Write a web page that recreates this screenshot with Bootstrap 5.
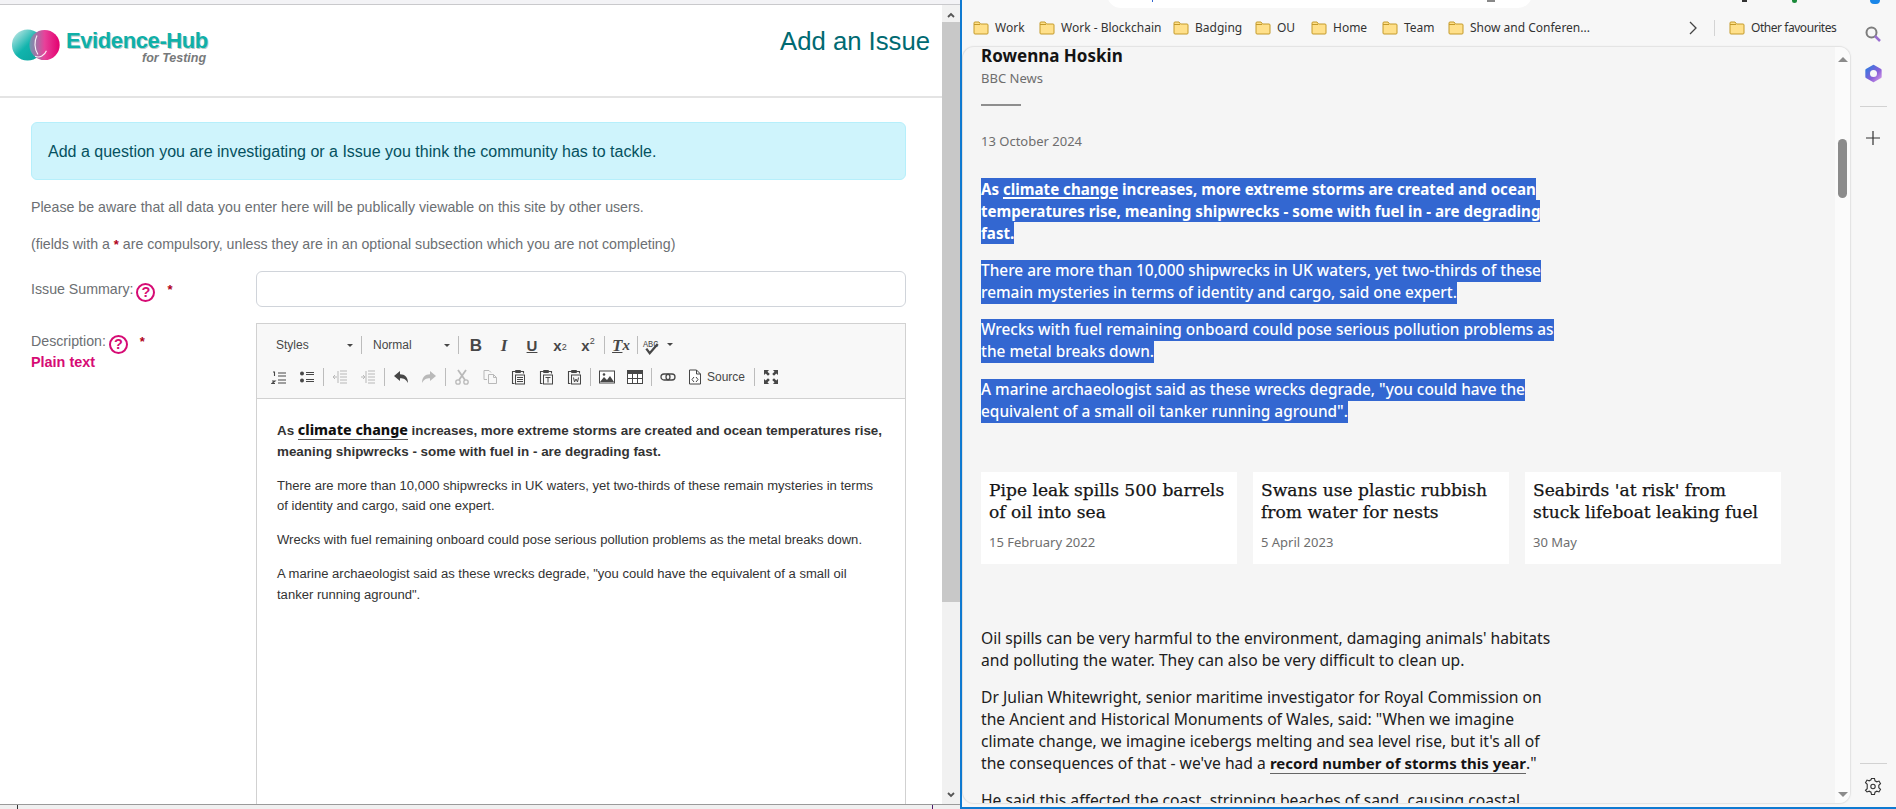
<!DOCTYPE html>
<html lang="en">
<head>
<meta charset="utf-8">
<title>Add an Issue</title>
<link href="https://cdn.jsdelivr.net/npm/bootstrap@5.3.0/dist/css/bootstrap.min.css" rel="stylesheet">
<style>
html,body{height:809px;overflow:hidden;margin:0}
body{font-family:"Liberation Sans",Arial,sans-serif;background:#fff;color:#333}
.pane-left{width:960px;height:809px;flex:none}
.top-strip{height:5px;background:#f3f3f6;border-bottom:1px solid #c9c9cc}
.win-left{height:799px;overflow:hidden}
.bottom-strip{height:5px;background:#f0f0f0;border-top:1px solid #9a9a9a;position:relative}
.bottom-strip i{position:absolute;top:0;width:1px;height:5px;background:#333}
.bottom-strip i:first-child{left:17px}.bottom-strip i:nth-child(2){left:932px;background:#4b1d6b}
.page-left{width:942px;flex:none;overflow:hidden}
.head-row{height:93px;border-bottom:2px solid #e4e4e4;padding:0 12px 0 12px}
.logo-box{width:200px;height:40px;margin-top:-5px}
.logo-name{font-weight:700;font-size:22px;line-height:24px;color:#0fb0a8;letter-spacing:-.4px;text-shadow:1px 1px 0 #b9c9c8;position:absolute;left:54px;top:1px;white-space:nowrap}
.logo-sub{font-weight:700;font-style:italic;font-size:12.5px;line-height:14px;color:#77797a;position:absolute;left:130px;top:23px;white-space:nowrap}
.page-title{font-size:25.7px;line-height:34px;color:#006a72;font-weight:400;margin:0 0 19px}
.form-wrap{padding:24px 36px 0 31px;font-size:14.2px;color:#6c6f73}
.note-box{height:58px;padding:2px 16px 0;margin:0 0 19px;font-size:16px;color:#055160;background:#cff4fc;border-color:#b6effb;display:flex;align-items:center}
.form-note{margin:0 0 21px;line-height:16px}
.form-note.last-note{margin-bottom:18px}
.req{color:#b00020;font-weight:700;font-size:13px}
.fld-label{width:225px;flex:none;line-height:20px}
.help-q{display:inline-flex;width:19px;height:19px;border:2.6px solid #d60b74;border-radius:50%;color:#d60b74;font-size:14.5px;font-weight:700;align-items:center;justify-content:center;margin:0 12px 0 -1px;line-height:1;vertical-align:-3px}
.plain-link{color:#d60b74;font-weight:700;font-size:14.4px;line-height:20px;margin-top:-2px}
.sum-input{height:36px;border-color:#d0d4da}
.row-sum{margin-bottom:16px}
.row-sum .fld-label{padding-top:8px}
.row-desc .fld-label{padding-top:8px}
.editor-box{flex:1;height:600px;border:1px solid #d1d1d1}
.ed-toolbar{height:75px;background:#f8f8f8;border-bottom:1px solid #d1d1d1;padding:5px 0 0 8px;color:#474747}
.ed-line{height:32px;display:flex;align-items:center}
.tb-btn{width:28px;height:22px;flex:none;display:flex;align-items:center;justify-content:center;font-size:16px;line-height:1;color:#474747}
.tb-btn svg{width:16px;height:16px}
.tb-off{opacity:.35}
.tb-sep{width:1px;height:18px;background:#bcbcbc;margin:0 2px;flex:none}
.tb-combo{height:22px;flex:none;display:flex;align-items:center;font-size:12px;padding-left:11px;position:relative;color:#474747}
.tb-combo.c1{width:94px}.tb-combo.c2{width:92px;padding-left:9px}
.tb-combo::after,.tb-caret{content:"";position:absolute;right:6px;top:10px;border:3px solid transparent;border-top-color:#474747;border-bottom:0}
.tb-first{margin-left:1px}
.tb-b{font-weight:700;font-size:17px}
.tb-i{font-style:italic;font-weight:700;font-family:"Liberation Serif",serif;font-size:17px}
.tb-u{font-weight:700;text-decoration:underline;font-size:15px}
.tb-x{font-weight:700;font-size:15px}
.tb-x sub,.tb-x sup{font-size:9px;font-weight:400}
.tb-spell{width:34px;position:relative;justify-content:flex-start;font-size:8.5px;font-family:"Liberation Mono",monospace;padding-left:3px}
.tb-spell svg{position:absolute;left:4px;top:6px}
.tb-spell .tb-caret{right:1px;top:9px}
.tb-src{width:70px;font-size:12px;justify-content:flex-start;padding-left:5px;gap:4px}
.ed-body{padding:22px 20px 0;font-size:13.05px;line-height:20.8px;color:#333}
.ed-body p{margin:0 0 13px}
.ed-lead{font-size:13.4px;font-weight:700}
.ed-link{font-family:"Noto Sans",sans-serif;font-weight:800;color:#111;border-bottom:1px solid #555;font-size:14.2px;line-height:1}
.sb-left{width:18px;flex:none;background:#f1f1f1;position:relative;font-size:0}
.sb-thumb{height:580px;background:#c8c8c8;margin-top:17px}
.sb-up,.sb-down{position:absolute;left:5px;width:8px;height:8px}
.sb-up{top:6px}.sb-down{bottom:5px}
.pane-right{width:936px;flex:none;height:809px;background:#f7f7f7;border-left:2px solid #0f7ad1;border-bottom:2px solid #0f7ad1;font-family:"Noto Sans","Open Sans",sans-serif;position:relative}
.addr-row{height:9px;position:relative}
.addr-pill{position:absolute;left:145px;width:425px;top:-20px;height:28px;background:#fff;border-radius:0 0 14px 14px}
.clip-mark{position:absolute;top:0;height:2px;background:#333}
.mk-a{left:780px;width:5px}
.mk-e{left:830px;width:5px;height:3px;border-radius:0 0 4px 4px;background:#1b8a3a}
.mk-f{left:908px;width:10px;height:4px;border-radius:0 0 6px 6px;background:#1a86e8}
.mk-g{left:190px;width:1px;background:#3367d1}.mk-h{left:525px;width:8px;background:#888}
.bm-row{height:37px;display:grid;grid-template-columns:66px 134px 82px 56px 71px 66px 234px 32px 15px 1fr;align-items:center;padding-left:11px;font-size:12px;color:#333}
.bm-item{display:flex;align-items:center;gap:6px;white-space:nowrap}
.bm-item svg{width:16px;height:14px;flex:none}
.bm-tight{letter-spacing:-.45px}
.bm-chev{margin-left:6px}
.bm-sep{width:1px;height:16px;background:#d4d4d4}
.main-row{height:758px}
.read-pane{width:889px;flex:none;height:758px;background:#f5f5f5;border:1px solid #e4e4e4;border-left-color:#e0e0e0;border-radius:12px;overflow:hidden;box-shadow:0 0 2px rgba(0,0,0,.06)}
.art-col{width:872px;flex:none;padding-left:18px;overflow:hidden;height:756px;font-family:"Noto Sans",sans-serif;font-size:15.65px;line-height:22px;color:#202020}
.au-name{font-weight:700;font-size:17px;line-height:22px;color:#141414;margin-top:-2px}
.au-org{font-size:13px;line-height:20px;color:#6e6e6e;margin-top:1px}
.au-rule{width:40px;height:2px;background:#8e8e8e;margin:16px 0 25px}
.au-date{font-size:13px;line-height:20px;color:#6e6e6e;margin-bottom:27px}
.sel-p{margin:0 0 15.600px}
.sel-line{display:block;width:fit-content;background:#3367d1;color:#fff;white-space:nowrap;font-weight:500;font-size:15.4px}
.sel-bold .sel-line{font-weight:700;font-size:15.12px}
.sel-bold u{text-decoration-thickness:2px;text-underline-offset:2px}
.card-row{display:flex;gap:16px;margin:49px 0 63px}
.story{width:256px;height:92px;background:#fff;padding:7px 8px 0;flex:none}
.story-h{font-family:"DejaVu Serif","Liberation Serif",serif;font-size:17.1px;line-height:22px;color:#141414;margin:0;font-weight:400;white-space:nowrap;-webkit-text-stroke:.25px #141414}
.story-d{font-size:13px;line-height:18px;color:#6e6e6e;margin-top:10px}
.body-p{margin:0 0 15px;white-space:nowrap}
.body-p b{font-weight:700;color:#141414;border-bottom:1px solid #666;font-size:15px}
.sb-right{width:15px;flex:none;background:#fbfbfb;position:relative}
.sb-right i{display:block;position:absolute;left:3px;width:9px;height:59px;background:#8b8b8b;border-radius:5px;top:92px}
.tri-up,.tri-dn{position:absolute;left:3px;width:0;height:0;border-left:5px solid transparent;border-right:5px solid transparent}
.tri-up{top:10px;border-bottom:5px solid #8b8b8b}.tri-dn{bottom:6px;border-top:5px solid #8b8b8b}
.side-rail{width:44px;flex:none;position:relative}
.rail-sep{position:absolute;left:9px;width:27px;height:1px;background:#d2d2d2}
.rs-a{top:60px}.rs-b{top:717px}
.rail-ico{position:absolute;left:13px;width:18px;height:18px}
.ri-search{top:-21px}.ri-copilot{top:17px;left:12px;width:21px;height:21px}.ri-plus{top:83px}.ri-gear{top:731px}
</style>
</head>
<body class="d-flex">
<svg width="0" height="0" class="position-absolute">
<defs>
<linearGradient id="lg1" x1="0" y1="0" x2="1" y2="1"><stop offset="0" stop-color="#d9efee"/><stop offset=".5" stop-color="#11b4ad"/><stop offset="1" stop-color="#0b9f9a"/></linearGradient>
<linearGradient id="lg2" x1="0" y1="0" x2="1" y2="0"><stop offset="0" stop-color="#6a9ab0"/><stop offset=".5" stop-color="#e7429a"/><stop offset="1" stop-color="#e4006f"/></linearGradient>
<linearGradient id="cp" x1="0" y1="0" x2="1" y2="1"><stop offset="0" stop-color="#2a7be0"/><stop offset=".6" stop-color="#8a5fd8"/><stop offset="1" stop-color="#d59ae8"/></linearGradient>
<symbol id="fold" viewBox="0 0 16 14"><path d="M1 3V2q0-1 1-1h4l1.500 2H14q1 0 1 1v8q0 1-1 1H2q-1 0-1-1z" fill="#ffe08a" stroke="#c49a2a"/><path d="M1 3.500h6" stroke="#c49a2a" fill="none"/></symbol>
<symbol id="i-ol" viewBox="0 0 16 16"><path d="M2 3h1.500v4M1 12h3l-3 2.500h3M7 4h8M7 7h8M7 11h8M7 14h8" stroke="#474747" fill="none" stroke-width="1.100"/></symbol>
<symbol id="i-ul" viewBox="0 0 16 16"><circle cx="3" cy="4.500" r="2" fill="#474747"/><circle cx="3" cy="11.500" r="2" fill="#474747"/><path d="M7 3.500h8M7 5.500h8M7 10.500h8M7 12.500h8" stroke="#474747" stroke-width="1.100"/></symbol>
<symbol id="i-ind" viewBox="0 0 16 16"><path d="M8 2h7M8 5h7M8 8h7M8 11h7M8 14h7M6 2v12" stroke="#474747" fill="none"/><path d="M1 8h4M3 6l-2 2 2 2" stroke="#474747" fill="none"/></symbol>
<symbol id="i-out" viewBox="0 0 16 16"><path d="M8 2h7M8 5h7M8 8h7M8 11h7M8 14h7M6 2v12" stroke="#474747" fill="none"/><path d="M1 8h4M3 6l2 2-2 2" stroke="#474747" fill="none"/></symbol>
<symbol id="i-undo" viewBox="0 0 16 16"><path d="M1 7l6-5v3.300c5 0 8 3 8 8.700-2-3.500-4-4.700-8-4.700V12z" fill="#474747"/></symbol>
<symbol id="i-redo" viewBox="0 0 16 16"><path d="M15 7L9 2v3.300C4 5.300 1 8.300 1 14c2-3.500 4-4.700 8-4.700V12z" fill="#474747"/></symbol>
<symbol id="i-cut" viewBox="0 0 16 16"><circle cx="4" cy="13" r="2.200" fill="none" stroke="#474747" stroke-width="1.300"/><circle cx="12" cy="13" r="2.200" fill="none" stroke="#474747" stroke-width="1.300"/><path d="M5 11L12 1M11 11L4 1" stroke="#474747" stroke-width="1.800"/></symbol>
<symbol id="i-copy" viewBox="0 0 16 16"><path d="M2 1.500h5l2 2M2 1.500v9h3M6.500 5.500h5l3 3v6h-8zM11.500 5.500v3h3" fill="none" stroke="#474747"/></symbol>
<symbol id="i-paste" viewBox="0 0 16 16"><path d="M5 2.500H2.500v12h2M11 2.500h2.500v2" fill="none" stroke="#474747" stroke-width="1.100"/><rect x="5" y="1" width="6" height="3" rx="1" fill="#474747"/><rect x="5.500" y="6" width="9" height="9" fill="none" stroke="#474747"/><path d="M7 8.500h6M7 10.500h6M7 12.500h6" stroke="#474747"/></symbol>
<symbol id="i-ptxt" viewBox="0 0 16 16"><path d="M5 2.500H2.500v12h2M11 2.500h2.500v2" fill="none" stroke="#474747" stroke-width="1.100"/><rect x="5" y="1" width="6" height="3" rx="1" fill="#474747"/><rect x="5.500" y="6" width="9" height="9" fill="none" stroke="#474747"/><path d="M7.500 8.500h5M10 8.500v5" stroke="#474747"/></symbol>
<symbol id="i-pword" viewBox="0 0 16 16"><path d="M5 2.500H2.500v12h2M11 2.500h2.500v2" fill="none" stroke="#474747" stroke-width="1.100"/><rect x="5" y="1" width="6" height="3" rx="1" fill="#474747"/><rect x="5.500" y="6" width="9" height="9" fill="none" stroke="#474747"/><path d="M7.500 8.500l1 4.500 1.500-3 1.500 3 1-4.500" fill="none" stroke="#474747"/></symbol>
<symbol id="i-img" viewBox="0 0 16 16"><rect x=".5" y="2" width="15" height="12" fill="#fff" stroke="#474747"/><path d="M1 13l4-5 3 3 3-4 4 6z" fill="#474747"/><circle cx="5" cy="5.500" r="1.300" fill="#474747"/></symbol>
<symbol id="i-tbl" viewBox="0 0 16 16"><rect x=".5" y="1.500" width="15" height="13" fill="#fff" stroke="#474747"/><rect x="0" y="1" width="16" height="4" fill="#474747"/><path d="M5.500 5v9M10.500 5v9M1 9.500h14" stroke="#474747"/></symbol>
<symbol id="i-link" viewBox="0 0 16 16"><rect x="1" y="5" width="9" height="6" rx="3" fill="none" stroke="#474747" stroke-width="1.300"/><rect x="6" y="5" width="9" height="6" rx="3" fill="none" stroke="#474747" stroke-width="1.300"/></symbol>
<symbol id="i-src" viewBox="0 0 16 16"><path d="M2.500 1h7l4 4v10h-11zM9.500 1v4h4" fill="#fff" stroke="#474747"/><path d="M7 8l-2 2.500L7 13M9 8l2 2.500L9 13" fill="none" stroke="#474747"/></symbol>
<symbol id="i-max" viewBox="0 0 16 16"><path d="M1 1h5L4.500 2.700 6.800 5 5 6.800 2.700 4.500 1 6zM15 1v5l-1.700-1.500L11 6.800 9.200 5l2.300-2.300L10 1zM1 15v-5l1.700 1.500L5 9.200 6.800 11l-2.300 2.300L6 15zM15 15h-5l1.500-1.700L9.200 11 11 9.200l2.300 2.300L15 10z" fill="#474747"/></symbol>
</defs>
</svg>

<div class="pane-left d-flex flex-column">
  <div class="top-strip"></div>
  <div class="win-left d-flex">
    <div class="page-left">
      <div class="head-row d-flex justify-content-between align-items-center">
        <div class="logo-box position-relative">
          <svg width="50" height="34" viewBox="0 0 52 36" class="position-absolute top-0 start-0"><circle cx="16" cy="18" r="16.500" fill="url(#lg1)"/><circle cx="34" cy="18" r="16" fill="url(#lg2)"/><path d="M26 8c-3 6-3 14 1 20M24 30c5 2 10-1 12-6" fill="none" stroke="#fff" stroke-width="1.200" opacity=".9"/></svg>
          <span class="logo-name">Evidence-Hub</span>
          <span class="logo-sub">for Testing</span>
        </div>
        <h1 class="page-title">Add an Issue</h1>
      </div>
      <div class="form-wrap">
        <div class="alert note-box" role="alert">Add a question you are investigating or a Issue you think the community has to tackle.</div>
        <p class="form-note">Please be aware that all data you enter here will be publically viewable on this site by other users.</p>
        <p class="form-note last-note">(fields with a <span class="req">*</span> are compulsory, unless they are in an optional subsection which you are not completing)</p>
        <div class="d-flex row-sum">
          <label class="fld-label">Issue Summary: <span class="help-q">?</span><span class="req">*</span></label>
          <input class="form-control sum-input" type="text">
        </div>
        <div class="d-flex row-desc">
          <div class="fld-label">
            <label>Description: <span class="help-q">?</span><span class="req">*</span></label>
            <div class="plain-link">Plain text</div>
          </div>
          <div class="editor-box">
            <div class="ed-toolbar">
              <div class="ed-line">
                <div class="tb-combo c1">Styles</div><span class="tb-sep"></span>
                <div class="tb-combo c2">Normal</div><span class="tb-sep"></span>
                <span class="tb-btn tb-b tb-first">B</span><span class="tb-btn tb-i">I</span><span class="tb-btn tb-u">U</span>
                <span class="tb-btn tb-x">x<sub>2</sub></span><span class="tb-btn tb-x">x<sup>2</sup></span><span class="tb-sep"></span>
                <span class="tb-btn tb-i"><span class="text-decoration-underline">T</span><small>x</small></span><span class="tb-sep"></span>
                <span class="tb-btn tb-spell">ABC<svg width="14" height="11" viewBox="0 0 14 11"><path d="M2 6l3 4 7-8" fill="none" stroke="#474747" stroke-width="2"/></svg><span class="tb-caret"></span></span>
              </div>
              <div class="ed-line">
                <span class="tb-btn"><svg><use href="#i-ol"/></svg></span><span class="tb-btn"><svg><use href="#i-ul"/></svg></span><span class="tb-sep"></span>
                <span class="tb-btn tb-off"><svg><use href="#i-ind"/></svg></span><span class="tb-btn tb-off"><svg><use href="#i-out"/></svg></span><span class="tb-sep"></span>
                <span class="tb-btn"><svg><use href="#i-undo"/></svg></span><span class="tb-btn tb-off"><svg><use href="#i-redo"/></svg></span><span class="tb-sep"></span>
                <span class="tb-btn tb-off"><svg><use href="#i-cut"/></svg></span><span class="tb-btn tb-off"><svg><use href="#i-copy"/></svg></span><span class="tb-btn"><svg><use href="#i-paste"/></svg></span><span class="tb-btn"><svg><use href="#i-ptxt"/></svg></span><span class="tb-btn"><svg><use href="#i-pword"/></svg></span><span class="tb-sep"></span>
                <span class="tb-btn"><svg><use href="#i-img"/></svg></span><span class="tb-btn"><svg><use href="#i-tbl"/></svg></span><span class="tb-sep"></span>
                <span class="tb-btn"><svg><use href="#i-link"/></svg></span>
                <span class="tb-btn tb-src"><svg><use href="#i-src"/></svg>Source</span><span class="tb-sep"></span>
                <span class="tb-btn"><svg><use href="#i-max"/></svg></span>
              </div>
            </div>
            <div class="ed-body">
              <p class="ed-lead">As <span class="ed-link">climate change</span> increases, more extreme storms are created and ocean temperatures rise, meaning shipwrecks - some with fuel in - are degrading fast.</p>
              <p>There are more than 10,000 shipwrecks in UK waters, yet two-thirds of these remain mysteries in terms of identity and cargo, said one expert.</p>
              <p>Wrecks with fuel remaining onboard could pose serious pollution problems as the metal breaks down.</p>
              <p>A marine archaeologist said as these wrecks degrade, "you could have the equivalent of a small oil tanker running aground".</p>
            </div>
          </div>
        </div>
      </div>
    </div>
    <div class="sb-left">
      <svg class="sb-up" viewBox="0 0 8 8"><path d="M1 6l3-3 3 3" fill="none" stroke="#555" stroke-width="1.800"/></svg>
      <div class="sb-thumb"></div>
      <svg class="sb-down" viewBox="0 0 8 8"><path d="M1 2l3 3 3-3" fill="none" stroke="#555" stroke-width="1.800"/></svg>
    </div>
  </div>
  <div class="bottom-strip"><i></i><i></i></div>
</div>

<div class="pane-right">
  <div class="addr-row">
    <div class="addr-pill"></div>
    <span class="clip-mark mk-g"></span><span class="clip-mark mk-h"></span><span class="clip-mark mk-a"></span><span class="clip-mark mk-e"></span><span class="clip-mark mk-f"></span>
  </div>
  <div class="bm-row">
    <div class="bm-item"><svg><use href="#fold"/></svg>Work</div>
    <div class="bm-item"><svg><use href="#fold"/></svg>Work - Blockchain</div>
    <div class="bm-item"><svg><use href="#fold"/></svg>Badging</div>
    <div class="bm-item"><svg><use href="#fold"/></svg>OU</div>
    <div class="bm-item"><svg><use href="#fold"/></svg>Home</div>
    <div class="bm-item"><svg><use href="#fold"/></svg>Team</div>
    <div class="bm-item"><svg><use href="#fold"/></svg>Show and Conferen...</div>
    <div><svg width="10" height="14" viewBox="0 0 10 14" class="d-block bm-chev"><path d="M2 1l6 6-6 6" fill="none" stroke="#444" stroke-width="1.300"/></svg></div>
    <div class="bm-sep"></div>
    <div class="bm-item bm-tight"><svg><use href="#fold"/></svg>Other favourites</div>
  </div>
  <div class="main-row d-flex">
    <div class="read-pane d-flex">
      <div class="art-col">
        <div class="au-name">Rowenna Hoskin</div>
        <div class="au-org">BBC News</div>
        <div class="au-rule"></div>
        <div class="au-date">13 October 2024</div>
        <p class="sel-p sel-bold">
          <span class="sel-line">As <u>climate change</u> increases, more extreme storms are created and ocean</span>
          <span class="sel-line">temperatures rise, meaning shipwrecks - some with fuel in - are degrading</span>
          <span class="sel-line">fast.</span>
        </p>
        <p class="sel-p">
          <span class="sel-line">There are more than 10,000 shipwrecks in UK waters, yet two-thirds of these</span>
          <span class="sel-line">remain mysteries in terms of identity and cargo, said one expert.</span>
        </p>
        <p class="sel-p">
          <span class="sel-line">Wrecks with fuel remaining onboard could pose serious pollution problems as</span>
          <span class="sel-line">the metal breaks down.</span>
        </p>
        <p class="sel-p">
          <span class="sel-line">A marine archaeologist said as these wrecks degrade, "you could have the</span>
          <span class="sel-line">equivalent of a small oil tanker running aground".</span>
        </p>
        <div class="card-row">
          <div class="story"><h2 class="story-h">Pipe leak spills 500 barrels<br>of oil into sea</h2><div class="story-d">15 February 2022</div></div>
          <div class="story"><h2 class="story-h">Swans use plastic rubbish<br>from water for nests</h2><div class="story-d">5 April 2023</div></div>
          <div class="story"><h2 class="story-h">Seabirds 'at risk' from<br>stuck lifeboat leaking fuel</h2><div class="story-d">30 May</div></div>
        </div>
        <p class="body-p">Oil spills can be very harmful to the environment, damaging animals' habitats<br>and polluting the water. They can also be very difficult to clean up.</p>
        <p class="body-p">Dr Julian Whitewright, senior maritime investigator for Royal Commission on<br>the Ancient and Historical Monuments of Wales, said: "When we imagine<br>climate change, we imagine icebergs melting and sea level rise, but it's all of<br>the consequences of that - we've had a <b>record number of storms this year</b>."</p>
        <p class="body-p">He said this affected the coast, stripping beaches of sand, causing coastal</p>
      </div>
      <div class="sb-right"><span class="tri-up"></span><i></i><span class="tri-dn"></span></div>
    </div>
    <div class="side-rail">
      <svg class="rail-ico ri-search" viewBox="0 0 18 18"><circle cx="7.500" cy="7.500" r="5" fill="none" stroke="#7d7d7d" stroke-width="2"/><path d="M11 11l5 5" stroke="#9a6fd0" stroke-width="2.500"/></svg>
      <svg class="rail-ico ri-copilot" viewBox="0 0 18 18"><path d="M9 2.500l6 3.500v6l-6 3.500-6-3.500V6z" fill="url(#cp)" stroke="url(#cp)" stroke-width="2" stroke-linejoin="round"/><circle cx="9" cy="9" r="3" fill="#f7f7f7"/></svg>
      <div class="rail-sep rs-a"></div>
      <svg class="rail-ico ri-plus" viewBox="0 0 18 18"><path d="M9 2v14M2 9h14" stroke="#333" stroke-width="1.200"/></svg>
      <div class="rail-sep rs-b"></div>
      <svg class="rail-ico ri-gear" viewBox="0 0 18 18"><path d="M7.500 1.500h3l.5 2.300 1.800 1 2.200-.7 1.500 2.600-1.700 1.600v2.400l1.700 1.600-1.500 2.600-2.200-.7-1.800 1-.5 2.300h-3l-.5-2.300-1.800-1-2.200.7L1.500 13.300l1.700-1.600V7.300L1.500 5.700 3 3.100l2.200.7 1.800-1z" fill="none" stroke="#333" stroke-width="1.100"/><circle cx="9" cy="9.500" r="2.200" fill="none" stroke="#333" stroke-width="1.100"/></svg>
    </div>
  </div>
</div>
</body>
</html>
